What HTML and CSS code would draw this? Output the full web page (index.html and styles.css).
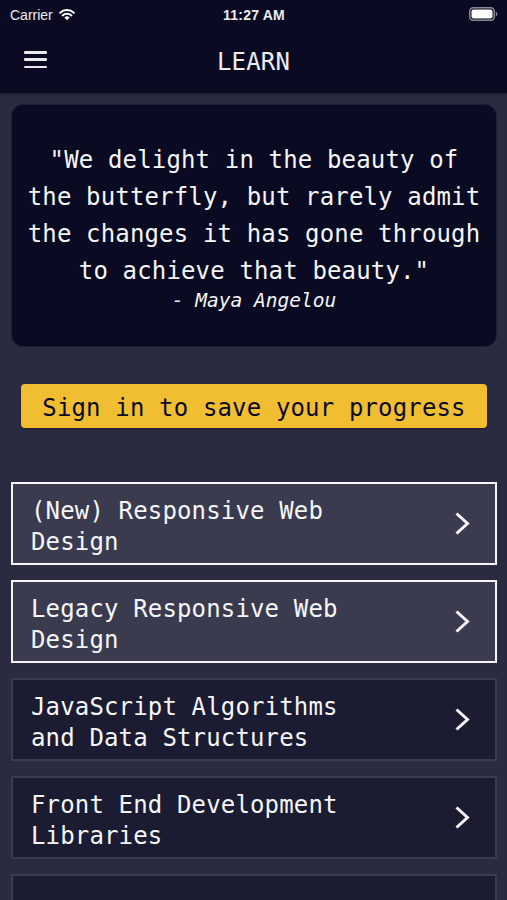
FILE: index.html
```html
<!DOCTYPE html>
<html>
<head>
<meta charset="utf-8">
<link rel="stylesheet" href="styles.css">
</head>
<body>
<div class="screen">
  <header class="top">
    <div class="status">
      <div class="status-left">
        <span class="carrier">Carrier</span>
        <svg class="wifi" width="18" height="14" viewBox="0 0 18 14">
          <path d="M9 13.2 L6.4 10.4 A3.8 3.8 0 0 1 11.6 10.4 Z" fill="#fff"/>
          <path d="M4.6 8.4 A6.4 6.4 0 0 1 13.4 8.4" fill="none" stroke="#fff" stroke-width="2" stroke-linecap="round"/>
          <path d="M2.2 5.8 A9.8 9.8 0 0 1 15.8 5.8" fill="none" stroke="#fff" stroke-width="2" stroke-linecap="round"/>
        </svg>
      </div>
      <span class="time">11:27 AM</span>
      <div class="status-right">
        <svg class="battery" width="29" height="14" viewBox="0 0 29 14">
          <rect x="0.75" y="0.75" width="24.5" height="12.5" rx="3.5" fill="none" stroke="#8a8a96" stroke-width="1.5"/>
          <rect x="2.5" y="2.5" width="21" height="9" rx="2" fill="#fff"/>
          <path d="M26.8 4.6 A2.6 2.6 0 0 1 26.8 9.4 Z" fill="#8a8a96"/>
        </svg>
      </div>
    </div>
    <nav class="nav">
      <button class="menu" aria-label="menu">
        <span></span><span></span><span></span>
      </button>
      <h1 class="title">LEARN</h1>
    </nav>
  </header>

  <main class="content">
    <section class="quote-card">
      <p class="quote">"We delight in the beauty of the butterfly, but rarely admit the changes it has gone through to achieve that beauty."</p>
      <p class="author">- Maya Angelou</p>
    </section>

    <button class="signin">Sign in to save your progress</button>

    <ul class="courses">
      <li class="course course-done">
        <span class="course-title">(New) Responsive Web Design</span>
        <svg class="chev" width="16" height="25" viewBox="0 0 16 25"><path d="M2.5 2.5 L13.5 12.5 L2.5 22.5" fill="none" stroke="#f5f6f7" stroke-width="3"/></svg>
      </li>
      <li class="course course-done">
        <span class="course-title">Legacy Responsive Web Design</span>
        <svg class="chev" width="16" height="25" viewBox="0 0 16 25"><path d="M2.5 2.5 L13.5 12.5 L2.5 22.5" fill="none" stroke="#f5f6f7" stroke-width="3"/></svg>
      </li>
      <li class="course">
        <span class="course-title">JavaScript Algorithms and Data Structures</span>
        <svg class="chev" width="16" height="25" viewBox="0 0 16 25"><path d="M2.5 2.5 L13.5 12.5 L2.5 22.5" fill="none" stroke="#f5f6f7" stroke-width="3"/></svg>
      </li>
      <li class="course">
        <span class="course-title">Front End Development Libraries</span>
        <svg class="chev" width="16" height="25" viewBox="0 0 16 25"><path d="M2.5 2.5 L13.5 12.5 L2.5 22.5" fill="none" stroke="#f5f6f7" stroke-width="3"/></svg>
      </li>
      <li class="course course-peek"></li>
    </ul>
  </main>
</div>
</body>
</html>
```

FILE: styles.css
```css
* { box-sizing: border-box; }

html, body {
  margin: 0;
  padding: 0;
  background: #2a2a40;
}

.screen {
  width: 507px;
  height: 900px;
  overflow: hidden;
  background: #2a2a40;
  font-family: "DejaVu Sans Mono", "Liberation Mono", monospace;
  color: #f5f6f7;
}

.top {
  background: #0a0a23;
  height: 93px;
  box-shadow: 0 1px 3px rgba(0, 0, 0, 0.35);
  position: relative;
  z-index: 1;
}

.status {
  height: 28px;
  display: grid;
  grid-template-columns: 1fr auto 1fr;
  align-items: center;
  padding: 2px 9px 0 10px;
  font-family: "Liberation Sans", Arial, sans-serif;
  font-size: 14px;
  color: #ececf0;
}

.status-left {
  display: flex;
  align-items: center;
  gap: 5px;
}

.wifi { margin-top: -3px; }

.time {
  font-weight: 700;
  letter-spacing: 0.2px;
}

.status-right {
  display: flex;
  justify-content: flex-end;
}

.battery { margin-top: -2px; }

.nav {
  height: 65px;
  display: flex;
  align-items: center;
  justify-content: center;
  position: relative;
}

.menu {
  position: absolute;
  left: 24px;
  top: 23px;
  width: 23px;
  height: 17px;
  padding: 0;
  border: 0;
  background: none;
  display: flex;
  flex-direction: column;
  justify-content: space-between;
}

.menu span {
  display: block;
  height: 2.5px;
  background: #e8e8ee;
  border-radius: 1px;
}

.title {
  margin: 3px 0 0 0;
  font-size: 24px;
  font-weight: 400;
  letter-spacing: 0.2px;
  color: #ececf2;
}

.content {
  padding: 11px 10px 0 11px;
  display: flex;
  flex-direction: column;
}

.quote-card {
  background: #0a0a23;
  border: 1px solid #1d1d35;
  border-radius: 12px;
  height: 243px;
  padding: 37px 10px 0;
  text-align: center;
}

.quote {
  margin: 0;
  font-size: 24px;
  line-height: 37px;
  letter-spacing: 0.15px;
  color: #f5f6f7;
}

.author {
  margin: -3px 0 0;
  font-size: 19.5px;
  font-style: italic;
  line-height: 28px;
  color: #f5f6f7;
}

.signin {
  margin: 37px 10px 0;
  height: 44px;
  border: 0;
  border-radius: 4px;
  background: #f1be32;
  color: #0a0a23;
  font-family: "DejaVu Sans Mono", "Liberation Mono", monospace;
  font-size: 24px;
  letter-spacing: 0.15px;
  padding: 4px 0 0;
  box-shadow: 0 1px 2px rgba(0, 0, 0, 0.3);
}

.courses {
  list-style: none;
  margin: 54px 0 0;
  padding: 0;
  display: flex;
  flex-direction: column;
  gap: 15px;
}

.course {
  height: 83px;
  flex: none;
  display: flex;
  align-items: center;
  justify-content: space-between;
  padding: 6px 25px 0 18px;
  background: #1b1b32;
  border: 2px solid #3b3b4f;
}

.course-done {
  background: #3b3b4f;
  border-color: #f5f6f7;
}

.course-title {
  max-width: 345px;
  font-size: 24px;
  line-height: 31px;
  letter-spacing: 0.15px;
  color: #f5f6f7;
}

.chev {
  flex: none;
  margin-top: -6px;
}
```
